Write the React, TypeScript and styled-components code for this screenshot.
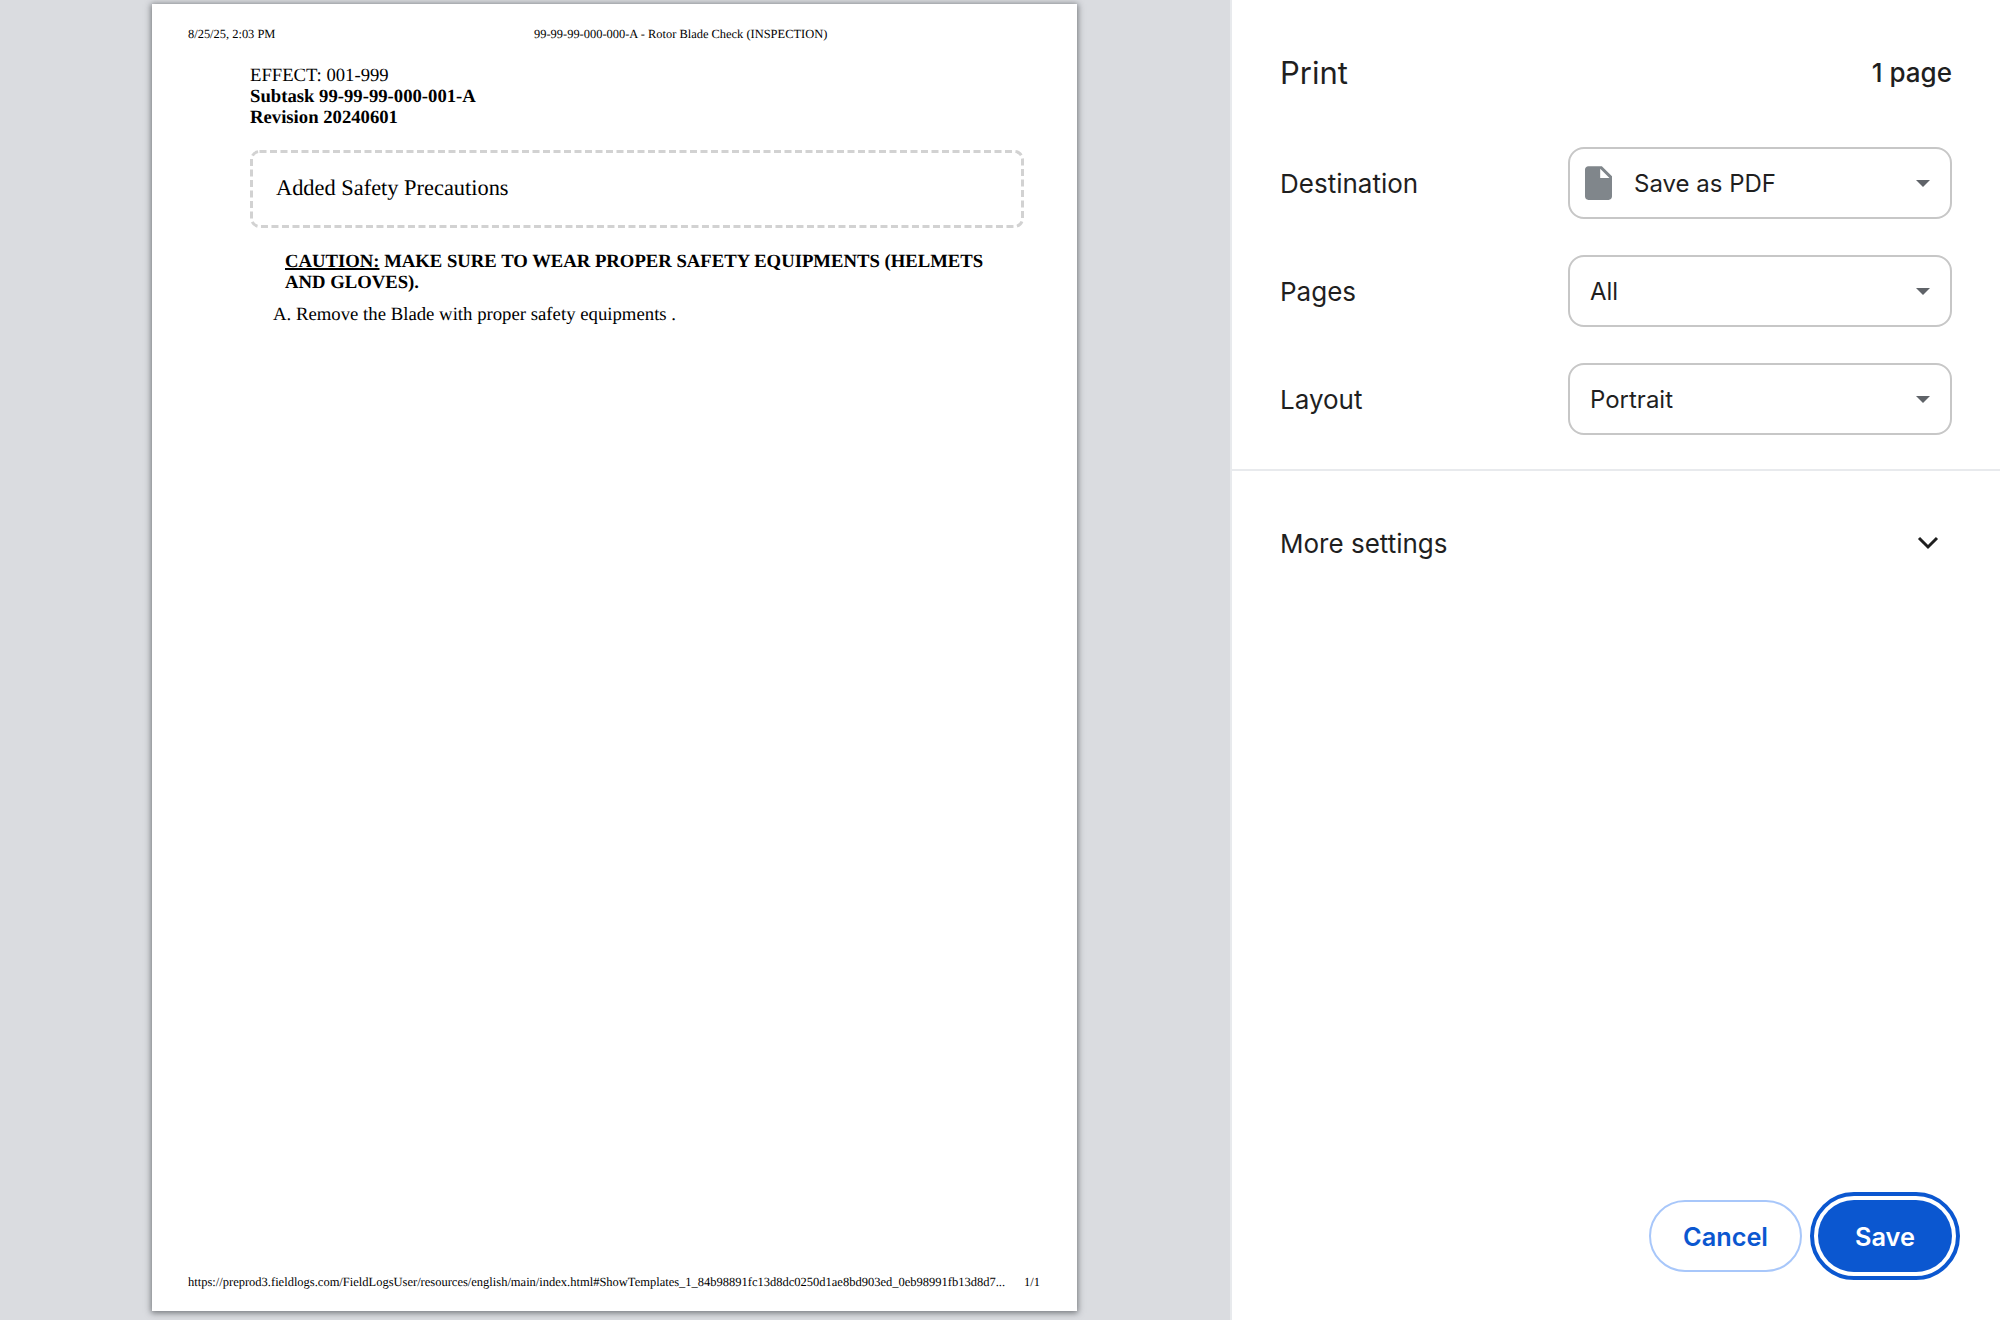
import React from "react";
import styled, { createGlobalStyle } from "styled-components";

const Global = createGlobalStyle`
  html, body { margin: 0; padding: 0; background: #fff; }
  * { box-sizing: border-box; }
`;

const Shell = styled.div`
  display: flex;
  width: 2000px;
  height: 1320px;
  overflow: hidden;
`;

const Preview = styled.div`
  width: 1230px;
  height: 100%;
  flex: none;
  background: #dadce0;
  padding: 4px 0 0 152px;
`;

const Paper = styled.div`
  width: 925px;
  height: 1307px;
  background: #fff;
  box-shadow: 0 1px 6px 1px rgba(60, 64, 67, 0.65);
  display: flex;
  flex-direction: column;
  padding: 22px 37px 21px 36px;
  font-family: "Liberation Serif", "Times New Roman", serif;
  color: #000;
  text-rendering: geometricPrecision;
`;

const MarginRow = styled.div`
  display: flex;
  height: 16px;
  align-items: center;
  font-size: 12.45px;
  line-height: 16px;
  white-space: nowrap;
`;

const HeaderDate = styled.span`
  width: 346px;
  flex: none;
`;

const FooterUrl = styled.span`
  width: 836px;
  flex: none;
  font-size: 12.5px;
`;

const Body = styled.div`
  flex: 1;
  padding: 23px 0 0 62px;
`;

const Meta = styled.div<{ $bold?: boolean }>`
  font-size: 18.7px;
  line-height: 21px;
  font-weight: ${(p) => (p.$bold ? 700 : 400)};
`;

const DashedBox = styled.div`
  position: relative;
  width: 774px;
  height: 78px;
  margin-top: 22px;
  padding: 0 0 2px 26px;
  display: flex;
  align-items: center;
  font-size: 22.4px;
`;

const DashedOutline = styled.svg`
  position: absolute;
  inset: 0;
  width: 100%;
  height: 100%;
`;

const Caution = styled.div`
  margin: 23px 0 0 35px;
  font-size: 18.7px;
  line-height: 21px;
  font-weight: 700;
  white-space: nowrap;
`;

const CautionLine = styled.div``;

const CautionTag = styled.u`
  text-decoration-thickness: 1.6px;
`;

const Step = styled.div`
  margin: 11px 0 0 23px;
  font-size: 18.75px;
  line-height: 21px;
`;

const Sidebar = styled.aside`
  flex: 1;
  height: 100%;
  background: #fff;
  border-left: 2px solid #e8eaed;
  display: flex;
  flex-direction: column;
  font-family: Inter, "Noto Sans", sans-serif;
  color: #1f1f1f;
`;

const Head = styled.header`
  display: flex;
  align-items: center;
  justify-content: space-between;
  height: 72px;
  margin-top: 36px;
  padding: 0 48px;
`;

const Title = styled.h1`
  margin: 0;
  font-size: 31px;
  font-weight: 400;
`;

const PageCount = styled.span`
  font-size: 26px;
  font-weight: 500;
`;

const Settings = styled.div`
  display: flex;
  flex-direction: column;
  gap: 36px;
  padding: 39px 48px 34px 48px;
  border-bottom: 2px solid #e8eaed;
`;

const Row = styled.div`
  display: flex;
  align-items: center;
  justify-content: space-between;
  height: 72px;
`;

const Label = styled.span`
  font-size: 26px;
`;

const Select = styled.div`
  width: 384px;
  height: 72px;
  border: 2px solid #c7c7c7;
  border-radius: 16px;
  display: flex;
  align-items: center;
  padding: 0 20px;
  font-size: 24px;
`;

const SelectText = styled.span`
  flex: 1;
`;

const DocIcon = styled.svg`
  width: 27px;
  height: 34px;
  margin: 0 22px 0 -5px;
  flex: none;
`;

const Caret = styled.span`
  width: 0;
  height: 0;
  border-left: 7px solid transparent;
  border-right: 7px solid transparent;
  border-top: 7px solid #5f6368;
`;

const MoreRow = styled.div`
  display: flex;
  align-items: center;
  justify-content: space-between;
  height: 72px;
  margin-top: 36px;
  padding: 0 61px 0 48px;
`;

const Spacer = styled.div`
  flex: 1;
`;

const Actions = styled.div`
  display: flex;
  justify-content: flex-end;
  align-items: center;
  gap: 16px;
  padding: 0 48px 48px 0;
`;

const Btn = styled.button<{ $primary?: boolean }>`
  height: 72px;
  border-radius: 36px;
  font-family: Inter, sans-serif;
  font-size: 25.3px;
  font-weight: 600;
  padding: 0;
  cursor: pointer;
  width: ${(p) => (p.$primary ? "134px" : "153px")};
  color: ${(p) => (p.$primary ? "#fff" : "#0b57d0")};
  background: ${(p) => (p.$primary ? "#0b57d0" : "#fff")};
  border: ${(p) => (p.$primary ? "none" : "2px solid #a8c7fa")};
  outline: ${(p) => (p.$primary ? "4px solid #0b57d0" : "none")};
  outline-offset: ${(p) => (p.$primary ? "4px" : "0")};
`;

const SelectField = ({ label, value, doc }: { label: string; value: string; doc?: boolean }) => (
  <Row>
    <Label>{label}</Label>
    <Select>
      {doc && (
        <DocIcon viewBox="4 2 16 20" aria-hidden="true">
          <path
            fill="#80868b"
            d="M6 2c-1.1 0-2 .9-2 2v16c0 1.1.9 2 2 2h12c1.1 0 2-.9 2-2V8l-6-6H6zm7 7V3.5L18.5 9H13z"
          />
        </DocIcon>
      )}
      <SelectText>{value}</SelectText>
      <Caret />
    </Select>
  </Row>
);

export default function App() {
  return (
    <Shell>
      <Global />
      <Preview>
        <Paper>
          <MarginRow>
            <HeaderDate>8/25/25, 2:03 PM</HeaderDate>
            <span>99-99-99-000-000-A - Rotor Blade Check (INSPECTION)</span>
          </MarginRow>
          <Body>
            <Meta>EFFECT: 001-999</Meta>
            <Meta $bold>Subtask 99-99-99-000-001-A</Meta>
            <Meta $bold>Revision 20240601</Meta>
            <DashedBox>
              <DashedOutline aria-hidden="true">
                <rect
                  x="1.5"
                  y="1.5"
                  width="771"
                  height="75"
                  rx="8"
                  fill="none"
                  stroke="#d2d2d2"
                  strokeWidth="3"
                  strokeDasharray="7 3.5"
                />
              </DashedOutline>
              Added Safety Precautions
            </DashedBox>
            <Caution>
              <CautionLine>
                <CautionTag>CAUTION:</CautionTag> MAKE SURE TO WEAR PROPER SAFETY EQUIPMENTS (HELMETS
              </CautionLine>
              <CautionLine>AND GLOVES).</CautionLine>
            </Caution>
            <Step>A. Remove the Blade with proper safety equipments .</Step>
          </Body>
          <MarginRow>
            <FooterUrl>
              https://preprod3.fieldlogs.com/FieldLogsUser/resources/english/main/index.html#ShowTemplates_1_84b98891fc13d8dc0250d1ae8bd903ed_0eb98991fb13d8d7...
            </FooterUrl>
            <span>1/1</span>
          </MarginRow>
        </Paper>
      </Preview>
      <Sidebar>
        <Head>
          <Title>Print</Title>
          <PageCount>1 page</PageCount>
        </Head>
        <Settings>
          <SelectField label="Destination" value="Save as PDF" doc />
          <SelectField label="Pages" value="All" />
          <SelectField label="Layout" value="Portrait" />
        </Settings>
        <MoreRow>
          <Label>More settings</Label>
          <svg width="22" height="14" viewBox="0 0 22 14" aria-hidden="true">
            <path d="M2 2l9 9 9-9" fill="none" stroke="#1f1f1f" strokeWidth="3" />
          </svg>
        </MoreRow>
        <Spacer />
        <Actions>
          <Btn>Cancel</Btn>
          <Btn $primary>Save</Btn>
        </Actions>
      </Sidebar>
    </Shell>
  );
}
